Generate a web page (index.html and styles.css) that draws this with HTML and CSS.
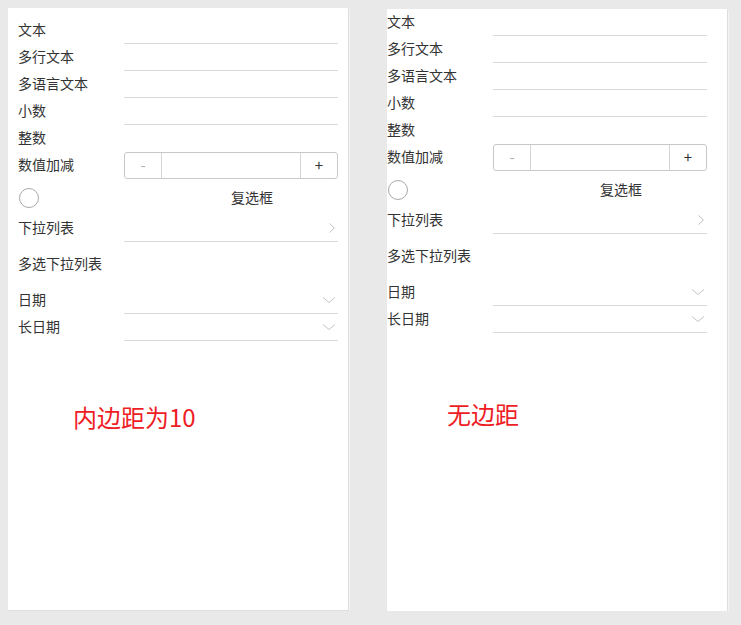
FILE: index.html
```html
<!DOCTYPE html>
<html lang="zh-CN">
  <head>
    <meta charset="UTF-8" />
    <meta name="viewport" content="width=device-width, initial-scale=1.0" />
    <title>表单边距</title>
    <link rel="stylesheet" href="styles.css">
  </head>

  <body>
    <div class="stage">
      <!-- 有内边距 -->
      <div class="panel panel-padded">
        <div class="form">
          <div class="row"><div class="label">文本</div><div class="field line"></div></div>
          <div class="row"><div class="label">多行文本</div><div class="field line"></div></div>
          <div class="row"><div class="label">多语言文本</div><div class="field line"></div></div>
          <div class="row"><div class="label">小数</div><div class="field line"></div></div>
          <div class="row"><div class="label">整数</div><div class="field"></div></div>
          <div class="row">
            <div class="label">数值加减</div>
            <div class="field stepper">
              <span class="step minus">-</span>
              <span class="step-value"></span>
              <span class="step plus">+</span>
            </div>
          </div>
          <div class="row row-check">
            <div class="label"><span class="radio"></span></div>
            <div class="field check-text">复选框</div>
          </div>
          <div class="row">
            <div class="label">下拉列表</div>
            <div class="field line arrow">
              <svg width="8" height="12" viewBox="0 0 8 12"><path d="M1.5 1.5 L6.5 6 L1.5 10.5" fill="none" stroke="#c4c4c4" stroke-width="1"/></svg>
            </div>
          </div>
          <div class="row row-multi"><div class="label">多选下拉列表</div><div class="field"></div></div>
          <div class="row">
            <div class="label">日期</div>
            <div class="field line arrow">
              <svg width="14" height="8" viewBox="0 0 14 8"><path d="M1 1.5 L7 6.5 L13 1.5" fill="none" stroke="#c4c4c4" stroke-width="1"/></svg>
            </div>
          </div>
          <div class="row">
            <div class="label">长日期</div>
            <div class="field line arrow">
              <svg width="14" height="8" viewBox="0 0 14 8"><path d="M1 1.5 L7 6.5 L13 1.5" fill="none" stroke="#c4c4c4" stroke-width="1"/></svg>
            </div>
          </div>
        </div>
        <div class="note note-left">内边距为10</div>
      </div>

      <!-- 无边距 -->
      <div class="panel panel-flat">
        <div class="form">
          <div class="row"><div class="label">文本</div><div class="field line"></div></div>
          <div class="row"><div class="label">多行文本</div><div class="field line"></div></div>
          <div class="row"><div class="label">多语言文本</div><div class="field line"></div></div>
          <div class="row"><div class="label">小数</div><div class="field line"></div></div>
          <div class="row"><div class="label">整数</div><div class="field"></div></div>
          <div class="row">
            <div class="label">数值加减</div>
            <div class="field stepper">
              <span class="step minus">-</span>
              <span class="step-value"></span>
              <span class="step plus">+</span>
            </div>
          </div>
          <div class="row row-check">
            <div class="label"><span class="radio"></span></div>
            <div class="field check-text">复选框</div>
          </div>
          <div class="row">
            <div class="label">下拉列表</div>
            <div class="field line arrow">
              <svg width="8" height="12" viewBox="0 0 8 12"><path d="M1.5 1.5 L6.5 6 L1.5 10.5" fill="none" stroke="#c4c4c4" stroke-width="1"/></svg>
            </div>
          </div>
          <div class="row row-multi"><div class="label">多选下拉列表</div><div class="field"></div></div>
          <div class="row">
            <div class="label">日期</div>
            <div class="field line arrow">
              <svg width="14" height="8" viewBox="0 0 14 8"><path d="M1 1.5 L7 6.5 L13 1.5" fill="none" stroke="#c4c4c4" stroke-width="1"/></svg>
            </div>
          </div>
          <div class="row">
            <div class="label">长日期</div>
            <div class="field line arrow">
              <svg width="14" height="8" viewBox="0 0 14 8"><path d="M1 1.5 L7 6.5 L13 1.5" fill="none" stroke="#c4c4c4" stroke-width="1"/></svg>
            </div>
          </div>
        </div>
        <div class="note note-right">无边距</div>
      </div>
    </div>
  </body>
</html>
```

FILE: styles.css
```css
/* Page */
body {
  margin: 0;
  padding: 0;
  background: #e9e9e9;
  font-family: "Microsoft YaHei", "Noto Sans CJK SC", "Noto Sans", sans-serif;
  font-size: 14px;
  color: #333;
}

.stage {
  display: flex;
  align-items: flex-start;
  gap: 39px;
  padding: 8px 0 0 8px;
}

.panel {
  box-sizing: border-box;
  width: 340px;
  height: 602px;
  background: #fff;
  box-shadow: 1px 1px 0 #dedede, 2px 2px 1px #f3f3f3;
}

.panel-padded {
  padding: 9px 10px 10px 10px;
}

.panel-flat {
  padding: 0;
  margin-top: 1px;
}

.form {
  width: 320px;
}

/* Rows */
.row {
  display: flex;
  height: 27px;
}

.row-check {
  height: 36px;
}

.row-multi {
  height: 45px;
}

.label {
  box-sizing: border-box;
  width: 106px;
  flex-shrink: 0;
  display: flex;
  align-items: center;
  padding-bottom: 4px;
  white-space: nowrap;
}

.field {
  flex: 1;
  box-sizing: border-box;
  display: flex;
  align-items: center;
}

.line {
  border-bottom: 1px solid #dadada;
}

.arrow {
  justify-content: flex-end;
  padding-right: 2px;
}

/* Stepper */
.stepper {
  border: 1px solid #c9c9c9;
  border-radius: 3px;
  align-items: stretch;
}

.step {
  width: 36px;
  display: flex;
  align-items: center;
  justify-content: center;
  font-size: 15px;
  padding-bottom: 2px;
}

.minus {
  color: #b0b0b0;
  border-right: 1px solid #d4d4d4;
}

.plus {
  color: #333;
  border-left: 1px solid #d4d4d4;
}

.step-value {
  flex: 1;
}

/* Checkbox */
.radio {
  box-sizing: border-box;
  width: 20px;
  height: 20px;
  margin: 5px 0 0 1px;
  border: 1px solid #a8a8a8;
  border-radius: 50%;
}

.check-text {
  padding: 0 0 1px 107px;
}

/* Red notes */
.note {
  font-size: 24px;
  line-height: 32px;
  color: #ee1c25;
}

.note-left {
  margin: 60px 0 0 55px;
}

.note-right {
  margin: 65px 0 0 60px;
}
```
